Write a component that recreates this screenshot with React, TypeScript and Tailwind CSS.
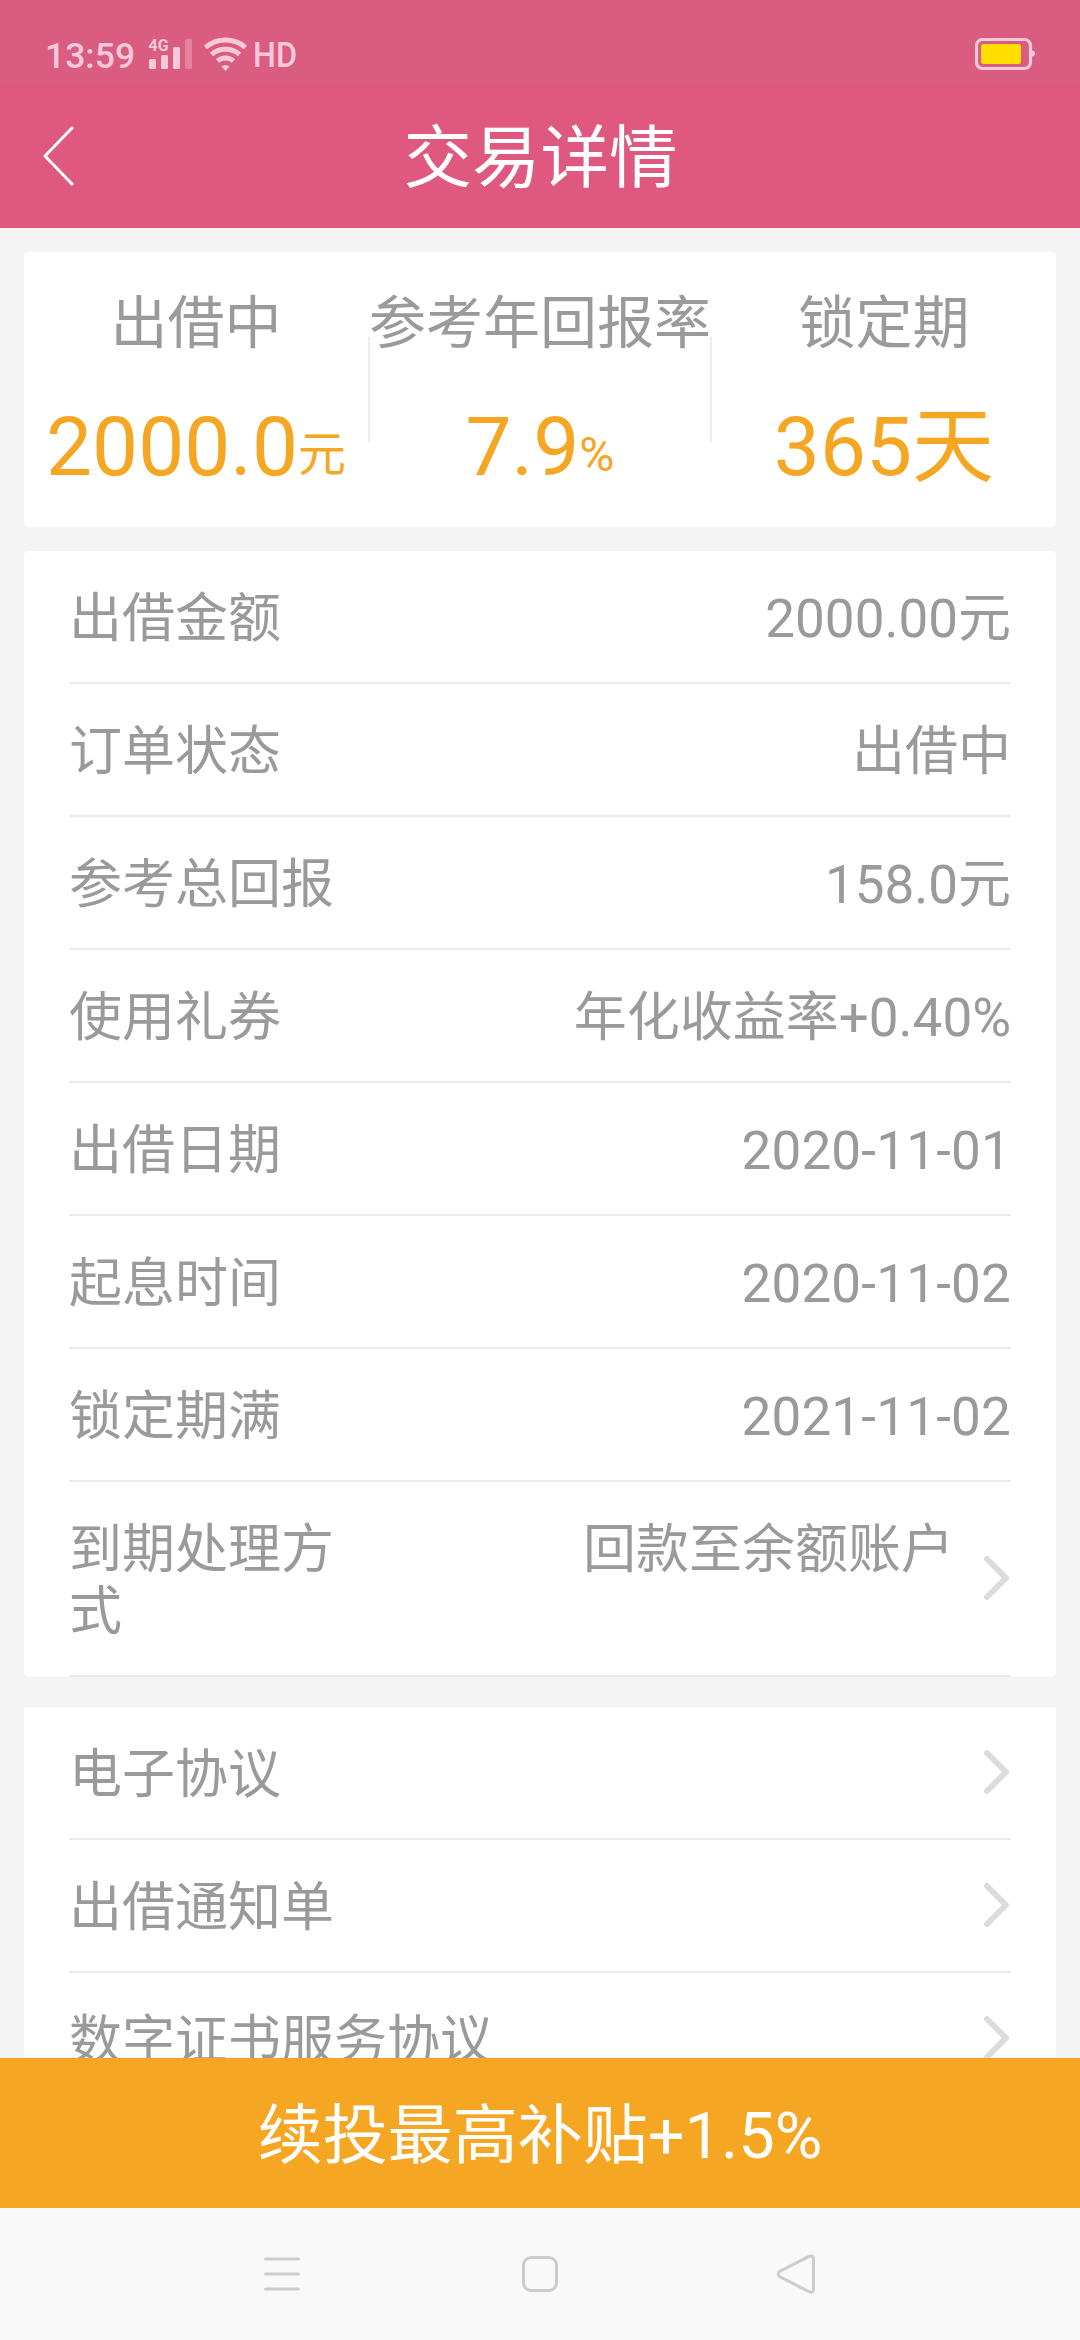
import type { ReactNode } from 'react';

interface Row {
  label: string;
  value?: string;
  link?: boolean;
  date?: boolean;
}

const DETAILS: Row[] = [
  { label: '出借金额', value: '2000.00元' },
  { label: '订单状态', value: '出借中' },
  { label: '参考总回报', value: '158.0元' },
  { label: '使用礼券', value: '年化收益率+0.40%' },
  { label: '出借日期', value: '2020-11-01', date: true },
  { label: '起息时间', value: '2020-11-02', date: true },
  { label: '锁定期满', value: '2021-11-02', date: true },
  { label: '到期处理方式', value: '回款至余额账户', link: true },
];

const AGREEMENTS: Row[] = [
  { label: '电子协议', link: true },
  { label: '出借通知单', link: true },
  { label: '数字证书服务协议', link: true },
];

function StatusBar() {
  return (
    <div className="flex h-[84px] shrink-0 items-start bg-[#da5c81] text-[#f8c9da]">
      <span className="ml-[45px] mt-[35px] w-[91px] text-[35.5px] font-medium leading-[42px]">13:59</span>
      <svg className="ml-[12px] mt-[36px] h-[36px] w-[46px]" viewBox="0 0 46 36" fill="currentColor">
        <text x="0.5" y="15" fontSize="17" fontWeight="700" textLength="20" lengthAdjust="spacingAndGlyphs">4G</text>
        <rect x="1" y="23" width="7" height="10" rx="1.5" />
        <rect x="13" y="19" width="7" height="14" rx="1.5" />
        <rect x="25" y="11" width="7" height="22" rx="1.5" />
        <rect x="37" y="3" width="7" height="30" rx="1.5" opacity="0.35" />
      </svg>
      <svg className="ml-[9px] mt-[36px] h-[36px] w-[44px]" viewBox="0 0 44 36" fill="none" stroke="currentColor" strokeWidth="5">
        <path d="M2.5 11.5C13.5 1.5 31.5 1.5 42.5 11.5" />
        <path d="M8.5 18.5C16 11.5 29 11.5 36.5 18.5" />
        <path d="M14.5 25C19 21 26 21 30.5 25" />
        <path d="M18.5 30.5C20.5 28.8 24.5 28.8 26.5 30.5L22.5 35Z" fill="currentColor" stroke="none" />
      </svg>
      <span className="ml-[6px] mt-[34px] origin-left scale-x-[0.91] text-[35.5px] font-medium leading-[42px]">HD</span>
      <svg className="ml-auto mr-[44px] mt-[37px] h-[34px] w-[61px]" viewBox="0 0 61 34">
        <rect x="1.5" y="2.5" width="54" height="29" rx="6" fill="none" stroke="currentColor" strokeWidth="3.2" />
        <path d="M57 13.5Q60 13.5 60 16.5T57 19.5Z" fill="currentColor" />
        <rect x="6" y="7" width="40" height="20" rx="2.5" fill="#ffde00" />
      </svg>
    </div>
  );
}

function Header() {
  return (
    <header className="flex h-[144px] shrink-0 items-center bg-[#df5880] text-white">
      <svg className="ml-[40px] h-[62px] w-[36px]" viewBox="0 0 36 62" fill="none" stroke="currentColor" strokeWidth="3" strokeLinecap="round" strokeLinejoin="round">
        <path d="M32 3L5 31L32 59" />
      </svg>
      <h1 className="mr-[75px] flex-1 pt-[6px] text-center text-[68.5px] leading-[80px]">交易详情</h1>
    </header>
  );
}

function Summary({ label, divided, children }: { label: string; divided?: boolean; children: ReactNode }) {
  return (
    <div className="relative w-[344px] text-center">
      {divided && (
        <>
          <span className="absolute left-0 top-[85px] h-[105px] w-[2px] bg-[#ebebeb]" />
          <span className="absolute right-0 top-[85px] h-[105px] w-[2px] bg-[#ebebeb]" />
        </>
      )}
      <div className="relative mt-[38px] whitespace-nowrap text-[57px] leading-[67px] text-[#9a9a9a]">{label}</div>
      <div className="mt-[42px] whitespace-nowrap text-[82px] leading-[96px] text-[#f5a623]">{children}</div>
    </div>
  );
}

function Unit({ children }: { children: ReactNode }) {
  return <span className="relative -top-[4px] text-[48px]">{children}</span>;
}

function Chevron() {
  return (
    <svg className="mb-px ml-[29px] h-[46px] w-[28px] shrink-0 self-center" viewBox="0 0 28 46" fill="none" stroke="#dcdcdc" strokeWidth="6" strokeLinecap="round" strokeLinejoin="round">
      <path d="M4 4L23 23L4 42" />
    </svg>
  );
}

function RowItem({ row }: { row: Row }) {
  return (
    <div className="flex border-b-2 border-[#ebebeb]">
      <div className="flex flex-1 items-start pb-[32px] pt-[37px] text-[53px] leading-[62px]">
        <span className={row.value ? 'w-[290px] shrink-0' : 'shrink-0'}>{row.label}</span>
        <span className={row.date ? 'flex-1 whitespace-nowrap text-right tracking-[0.2px]' : 'flex-1 whitespace-nowrap text-right'}>
          {row.value}
        </span>
      </div>
      {row.link && <Chevron />}
    </div>
  );
}

function NavBar() {
  return (
    <nav className="flex h-[132px] shrink-0 items-center justify-between bg-[#f9f9f9] px-[262px] text-[#cccccc]">
      <svg className="h-[42px] w-[40px]" viewBox="0 0 40 42" fill="none" stroke="currentColor" strokeWidth="3" strokeLinecap="round">
        <path d="M3.5 6H36.5M3.5 21H36.5M3.5 36H36.5" />
      </svg>
      <svg className="ml-[2px] h-[42px] w-[40px]" viewBox="0 0 40 42" fill="none" stroke="currentColor" strokeWidth="3">
        <rect x="3.5" y="4.5" width="33" height="33" rx="7.5" />
      </svg>
      <svg className="h-[42px] w-[42px]" viewBox="0 0 42 42" fill="none" stroke="currentColor" strokeWidth="3" strokeLinejoin="round">
        <path d="M32.5 3.6L3.5 18.5Q0.8 21 3.5 23.5L32.5 38.5Q37.5 40.5 37.5 36V6Q37.5 1.5 32.5 3.6Z" />
      </svg>
    </nav>
  );
}

export default function App() {
  return (
    <div className="flex h-[2340px] w-[1080px] flex-col overflow-hidden bg-[#f4f4f4] font-[Roboto,'Noto_Sans_CJK_SC',sans-serif] text-[#9a9a9a]">
      <StatusBar />
      <Header />

      <main className="min-h-0 flex-1 overflow-hidden px-6 pt-6">
        <section className="flex h-[275px] rounded-[5px] bg-white">
          <Summary label="出借中">
            2000.0<Unit>元</Unit>
          </Summary>
          <Summary label="参考年回报率" divided>
            7.9<Unit>%</Unit>
          </Summary>
          <Summary label="锁定期">365天</Summary>
        </section>

        <section className="mt-6 rounded-[5px] bg-white px-[45px]">
          {DETAILS.map(row => <RowItem key={row.label} row={row} />)}
        </section>

        <section className="mt-[30px] bg-white px-[45px]">
          {AGREEMENTS.map(row => <RowItem key={row.label} row={row} />)}
        </section>
      </main>

      <button className="h-[150px] shrink-0 bg-[#f5a623] pt-[5px] text-[65px] leading-[76px] text-white">续投最高补贴+1.5%</button>
      <NavBar />
    </div>
  );
}
